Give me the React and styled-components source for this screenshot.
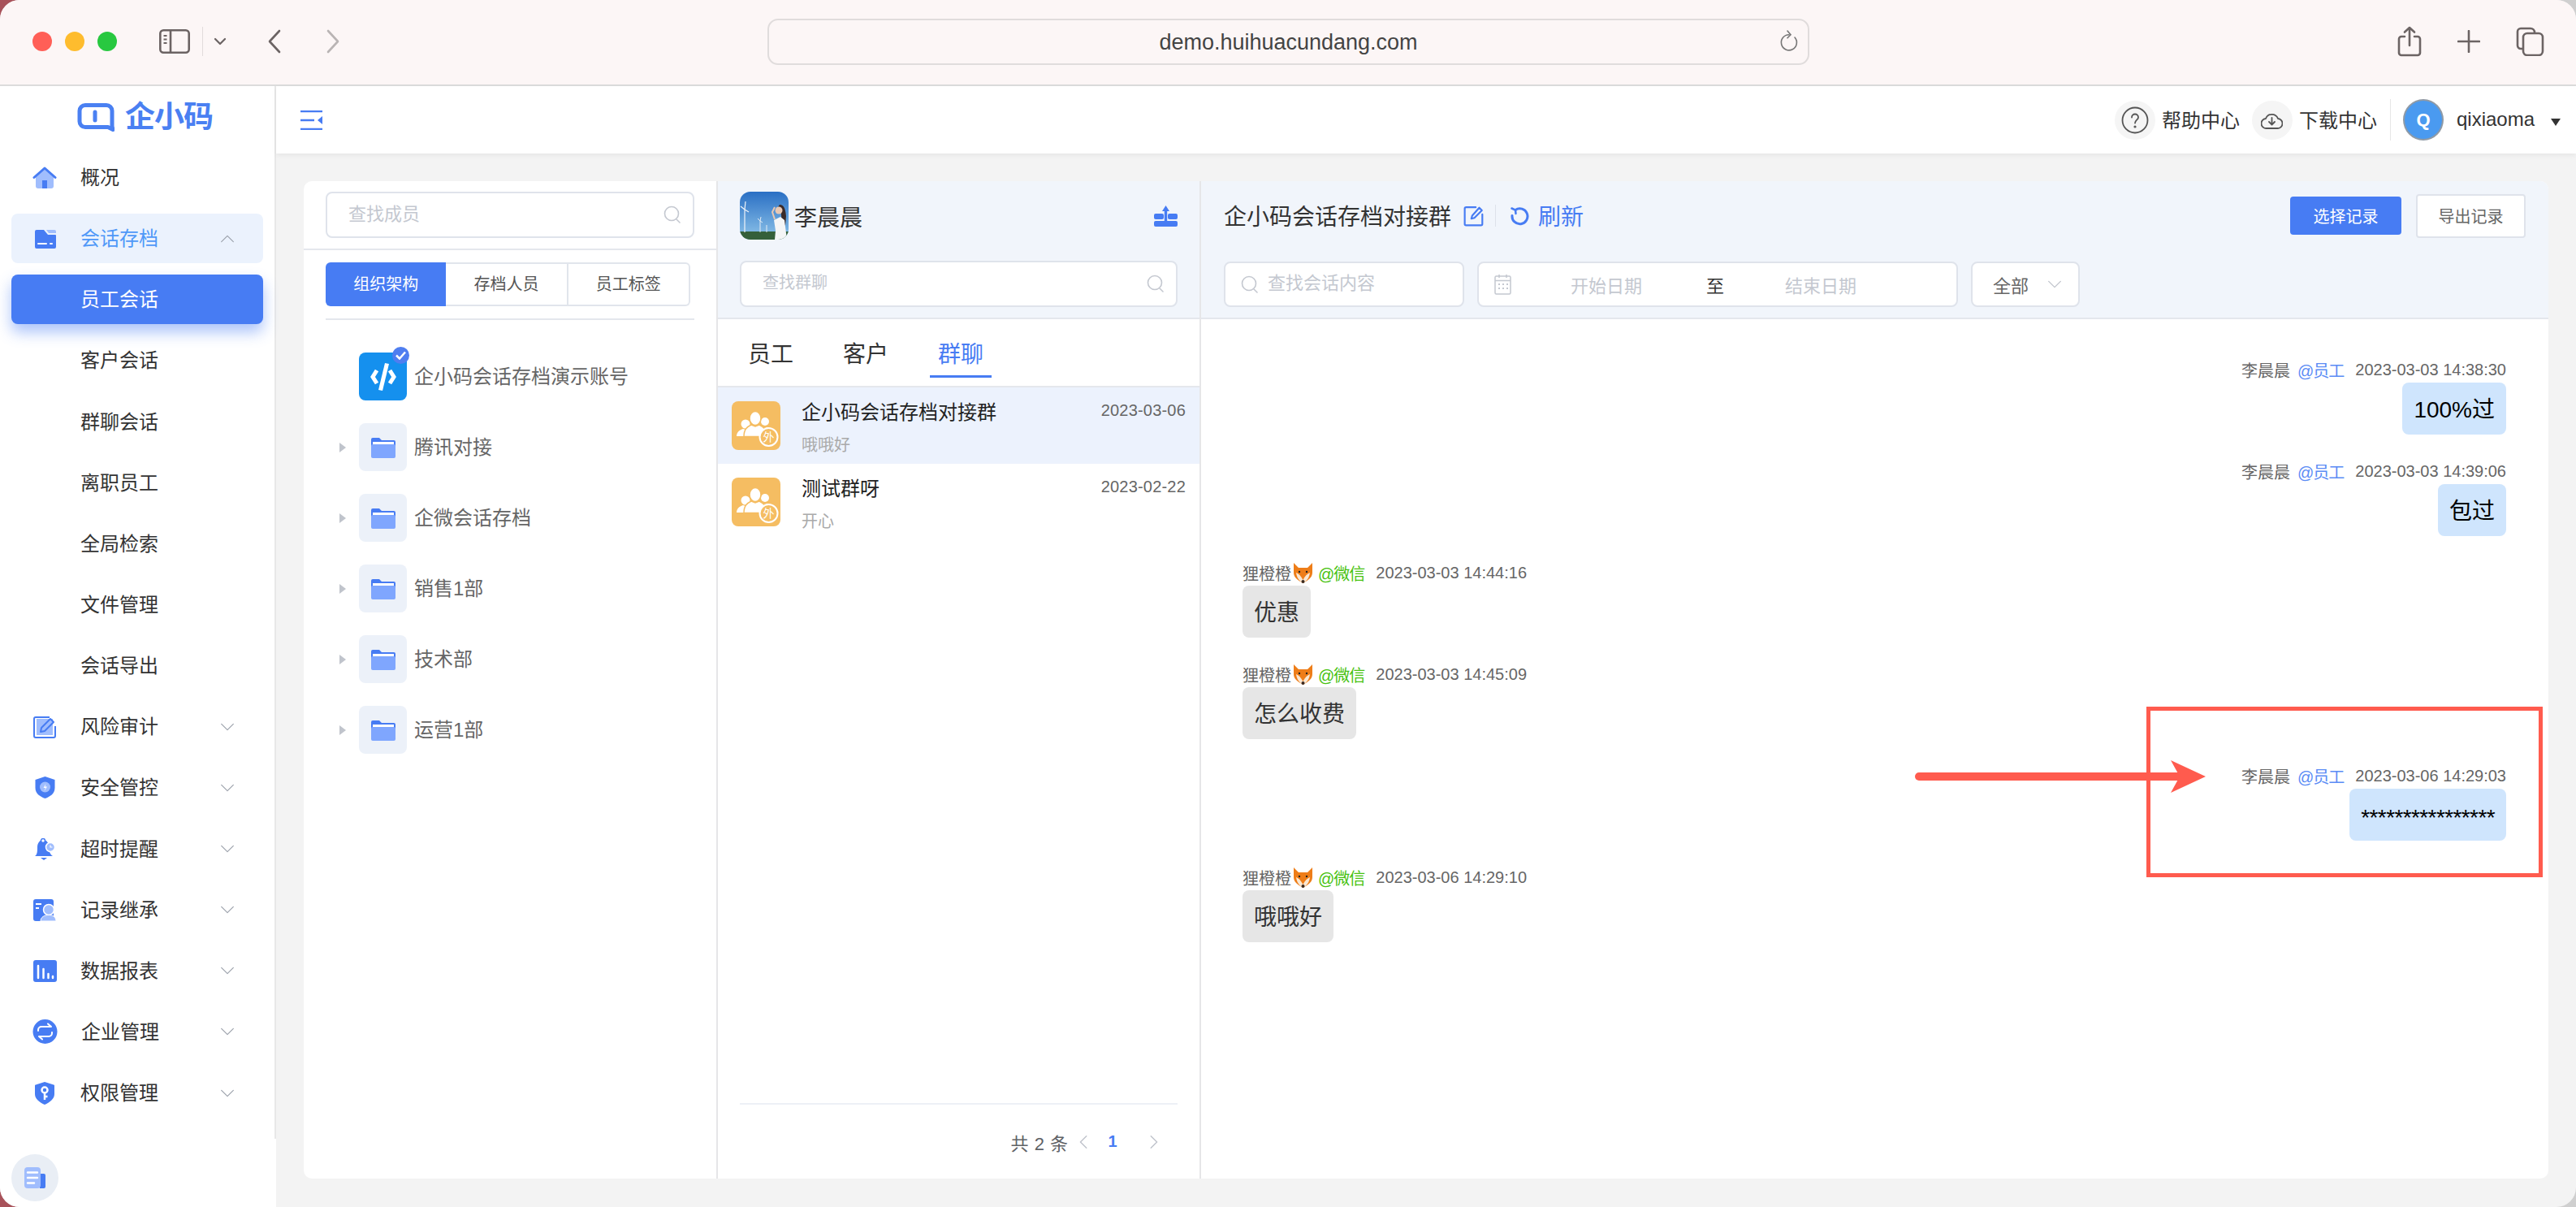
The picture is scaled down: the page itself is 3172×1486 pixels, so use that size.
import React from "react";
import styled, { createGlobalStyle } from "styled-components";

const BLUE = "#477cf3";
const LIGHT = "#a0bdfd";

const Global = createGlobalStyle`
  * { box-sizing: border-box; }
  html, body { margin: 0; padding: 0; width: 3172px; height: 1486px; overflow: hidden; background: linear-gradient(90deg, #a8525a 0 50%, #cfcfcf 50% 100%); }
  body, input, button { font-family: "Liberation Sans", "Noto Sans CJK SC", sans-serif; }
  svg { display: block; flex: none; }
`;

const Label = styled.span`
  padding-bottom: ${p => p.$up || 4}px;
`;
const Win = styled.div`
  width: 3172px; height: 1486px; border-radius: 24px; overflow: hidden;
  display: flex; flex-direction: column; background: #f3f3f3;
`;
const TitleBar = styled.header`
  flex: 0 0 106px; display: flex; align-items: center; padding-bottom: 2px;
  background: #fcf6f6; border-bottom: 2px solid #dcdcdc;
`;
const TitleLeft = styled.div`
  flex: 0 0 945px; display: flex; align-items: center; padding-left: 40px;
`;
const Light = styled.span`
  width: 24px; height: 24px; border-radius: 50%; margin-right: 16px; background: ${p => p.$c};
`;
const SepV = styled.span`
  width: 1px; height: 36px; background: #e2dcdc; margin: 0 12px 0 15px;
`;
const UrlBar = styled.div`
  position: relative; flex: 0 0 1283px; height: 57px; border: 2px solid #e0dcdc; border-radius: 13px;
  display: flex; align-items: center; justify-content: center; padding-top: 3px;
  font-size: 27px; color: #444;
`;
const UrlReload = styled.span`
  position: absolute; right: 11px; top: 10px;
`;
const TitleRight = styled.div`
  flex: 1; display: flex; align-items: center; justify-content: flex-end; gap: 44px; padding-right: 39px;
`;

const Body = styled.div`
  flex: 1; display: flex; min-height: 0;
`;
const Side = styled.aside`
  flex: 0 0 340px; display: flex; flex-direction: column; background: #fff;
`;
const SideMain = styled.div`
  flex: 0 0 1296px; border-right: 2px solid #e8e8e8; padding-left: 14px;
`;
const Logo = styled.div`
  height: 82px; padding: 21px 0 0 81px; display: flex; align-items: flex-start; gap: 13px;
`;
const LogoText = styled.span`
  font-size: 37px; line-height: 36px; font-weight: 700; color: #4a80f2; letter-spacing: -1px;
`;
const Nav = styled.nav`
  display: flex; flex-direction: column; gap: 14.15px;
`;
const NavItem = styled.div`
  width: 310px; height: 61px; border-radius: 8px; display: flex; align-items: center;
  padding-left: ${p => (p.$sub ? "85px" : "26px")}; padding-right: 33px;
  font-size: 24px; color: ${p => (p.$active ? "#fff" : p.$open ? "#4f98f8" : "#333")};
  background: ${p => (p.$active ? BLUE : p.$open ? "#ebf2fd" : "transparent")};
  box-shadow: ${p => (p.$active ? "0 10px 18px rgba(71,124,243,.45)" : "none")};
`;
const NavIcon = styled.span`
  flex: 0 0 30px; margin-right: 29px; display: flex; justify-content: center;
`;
const NavArrow = styled.span`
  margin-left: auto;
`;
const SideFoot = styled.div`
  flex: 1; padding: 19px 0 0 14px;
`;
const FootBtn = styled.div`
  width: 58px; height: 58px; border-radius: 50%; background: #e9eef5;
  display: flex; align-items: center; justify-content: center;
`;

const Main = styled.main`
  flex: 1; min-width: 0; display: flex; flex-direction: column;
`;
const TopBar = styled.div`
  flex: 0 0 83px; background: #fff; display: flex; align-items: center; padding: 0 19px 0 30px;
  box-shadow: 0 2px 6px rgba(0,0,0,.06); position: relative;
`;
const TopRight = styled.div`
  margin-left: auto; display: flex; align-items: center; font-size: 24px; color: #333;
`;
const IconCircle = styled.span`
  width: 50px; height: 48px; border-radius: 50%; background: #f5f5f5; margin: 0 8px 0 15px;
  display: flex; align-items: center; justify-content: center;
`;
const TopSep = styled.span`
  width: 1px; height: 51px; background: #e6e6e6; margin: 0 15px 0 16px;
`;
const UserAvatar = styled.span`
  width: 50px; height: 51px; border-radius: 50%; background: #4a9af0; border: 2px solid #8f9aa6;
  color: #fff; font-weight: 700; font-size: 22px; display: flex; align-items: center; justify-content: center;
`;
const UserName = styled.span`
  margin: 0 20px 0 16px; font-size: 24px; color: #333; padding-bottom: 2px;
`;
const Caret = styled.span`
  width: 0; height: 0; border-left: 6px solid transparent; border-right: 6px solid transparent;
  border-top: 9px solid #333; margin-top: 6px;
`;

const Content = styled.div`
  flex: 1; min-height: 0; padding: 34px 34px 35px; display: flex;
`;
const Card = styled.div`
  flex: 1; display: flex; border-radius: 10px; overflow: hidden; background: #fff;
`;
const Panel = styled.section`
  flex: 0 0 ${p => p.$w}px; display: flex; flex-direction: column; min-width: 0;
  border-right: 2px solid #e6e6e8;
`;
const Members = styled(Panel)`
  padding-top: 13px;
`;
const SearchBox = styled.div`
  position: relative; margin: ${p => p.$m || 0}; height: 57px; background: #fff;
  border: 2px solid #dfe3eb; border-radius: 8px; display: flex; align-items: center;
`;
const SearchIcon = styled.span`
  position: absolute; right: 14px; top: 14px;
`;
const Field = styled.input`
  flex: 1; width: 100%; min-width: 0; border: 0; outline: 0; background: transparent; padding: 0 0 ${p => p.$up || 0}px ${p => p.$pad}px;
  font-size: ${p => p.$size}px;
  &::placeholder { color: #c4c8d0; opacity: 1; }
`;
const Rule = styled.div`
  height: 2px; background: #e4e7ed; margin: 13px 0 15px;
`;
const Segs = styled.div`
  display: flex; margin: 0 27px; width: 449px; height: 54px;
`;
const Seg = styled.div`
  flex: 1; display: flex; align-items: center; justify-content: center; font-size: 20px; padding-bottom: 3px;
  color: ${p => (p.$on ? "#fff" : "#555")}; background: ${p => (p.$on ? BLUE : "#fff")};
  border-style: solid; border-color: #e1e5ec;
  border-width: ${p => (p.$on ? "0" : "2px 2px 2px 0")};
  border-radius: ${p => (p.$on ? "6px 0 0 6px" : p.$last ? "0 6px 6px 0" : "0")};
`;
const TreeRule = styled.div`
  height: 2px; margin: 15px 27px 0; background: #e4e7ed;
`;
const Tree = styled.div`
  padding: 40px 0 0 40px; display: flex; flex-direction: column; gap: 28px;
`;
const TreeRow = styled.div`
  position: relative; display: flex; align-items: center; padding-left: 28px; font-size: 24px; color: #666; height: 59px;
`;
const TreeCaret = styled.span`
  position: absolute; left: 4px; top: 24px; width: 0; height: 0;
  border-top: 6px solid transparent; border-bottom: 6px solid transparent; border-left: 8px solid #c0c4cc;
`;
const Tile = styled.span`
  width: 59px; height: 59px; border-radius: 8px; background: ${p => p.$bg}; margin-right: 9px;
  position: relative; display: flex; align-items: center; justify-content: center;
`;
const TileBadge = styled.span`
  position: absolute; right: -3px; top: -7px; width: 21px; height: 21px; border-radius: 50%; background: #4f7ef0;
  display: flex; align-items: center; justify-content: center;
`;

const Head = styled.div`
  flex: 0 0 170px; background: #f1f5fb; border-bottom: 2px solid #e4e7ed; padding: 13px ${p => p.$px}px 0;
`;
const HeadRow = styled.div`
  height: 59px; display: flex; align-items: center; margin-bottom: ${p => p.$mb}px;
`;
const OwnerName = styled.span`
  margin-left: 7px; font-size: 28px; color: #333;
`;
const Push = styled.span`
  margin-left: auto;
`;
const Tabs = styled.div`
  flex: 0 0 84px; display: flex; gap: 61px; padding-left: 37px; border-bottom: 2px solid #e4e7ed;
`;
const Tab = styled.div`
  position: relative; display: flex; align-items: center; font-size: 28px; color: ${p => (p.$on ? BLUE : "#333")};
  &::after {
    content: ""; display: ${p => (p.$on ? "block" : "none")}; position: absolute;
    left: -10px; right: -10px; bottom: 10px; height: 3px; background: ${BLUE};
  }
`;
const List = styled.div`
  flex: 1; min-height: 0;
`;
const Row = styled.div`
  height: 94px; padding: 17px 17px 0; display: flex; gap: 26px; background: ${p => (p.$on ? "#ecf2fd" : "#fff")};
`;
const RowBody = styled.div`
  flex: 1; min-width: 0;
`;
const RowTop = styled.div`
  height: 22px; display: flex; align-items: center; justify-content: space-between;
  font-size: 24px; color: #222;
`;
const RowDate = styled.span`
  font-size: 20px; color: #666; letter-spacing: .2px;
`;
const RowSub = styled.div`
  margin-top: 20px; font-size: 20px; line-height: 24px; color: #aaa;
`;
const Pager = styled.div`
  flex: 0 0 93px; margin: 0 27px; border-top: 2px solid #edf0f6; display: flex; align-items: center;
  justify-content: flex-end; padding-right: 15px; font-size: 22px; color: #606266;
`;
const PagerTotal = styled.span`
  margin-right: 5px; word-spacing: 1px;
`;
const PagerBtn = styled.span`
  width: 30px; display: flex; justify-content: center;
`;
const PagerNow = styled.span`
  width: 40px; text-align: center; font-size: 20px; font-weight: 700; color: ${BLUE}; margin-right: 15px;
`;

const Chat = styled.section`
  flex: 1; min-width: 0; display: flex; flex-direction: column;
`;
const ChatTitle = styled.span`
  font-size: 28px; color: #333; padding-bottom: 2px;
`;
const HeadSep = styled.span`
  width: 1px; height: 27px; background: #dde2ea; margin: 0 18px 0 13px;
`;
const Refresh = styled.span`
  margin-left: 11px; font-size: 28px; color: ${BLUE}; padding-bottom: 2px;
`;
const PrimaryBtn = styled.button`
  width: 137px; height: 47px; border: 0; border-radius: 4px; background: ${BLUE}; color: #fff; font-size: 20px; margin-right: 18px;
`;
const GhostBtn = styled.button`
  width: 135px; height: 54px; border: 2px solid #dfe3eb; border-radius: 4px; background: #fff; color: #666; font-size: 20px;
`;
const Filters = styled.div`
  display: flex; gap: 16px;
`;
const FilterBox = styled.div`
  position: relative; flex: 0 0 ${p => p.$w}px; min-width: 0; height: 56px; background: #fff; border: 2px solid #dfe3eb; border-radius: 8px;
  display: flex; align-items: center; padding-left: ${p => p.$pl}px; font-size: 22px; color: #666;
`;
const DatePart = styled.span`
  flex: 0 0 ${p => p.$w}px; text-align: center; color: ${p => (p.$dark ? "#333" : "#c4c8d0")};
`;
const SelectArrow = styled.span`
  margin-left: auto; margin-right: 18px;
`;
const Log = styled.div`
  position: relative; flex: 1; min-height: 0; padding: 47px 52px 0 51px; display: flex; flex-direction: column; gap: 30px;
`;
const Msg = styled.div`
  display: flex; flex-direction: column; align-items: ${p => (p.$me ? "flex-end" : "flex-start")};
`;
const Meta = styled.div`
  height: 31px; display: flex; align-items: center; font-size: 20px; color: #666;
`;
const Tag = styled.span`
  color: ${p => p.$c}; margin: 0 14px 0 ${p => p.$ml}px; letter-spacing: -1px;
`;
const Bubble = styled.div`
  height: 64px; padding: ${p => (p.$mask ? "18px" : "16px")} 14px 0; border-radius: 8px; font-size: 28px; line-height: 36px;
  background: ${p => (p.$me ? "#cfe5fd" : "#e6e6e6")}; color: ${p => (p.$me ? "#000" : "#333")};
  letter-spacing: ${p => (p.$mask ? "-0.6px" : "0")};
`;
const RedBox = styled.div`
  position: absolute; left: 1164px; top: 477px; width: 488px; height: 210px; border: 5px solid #ff5b4e; pointer-events: none;
`;
const RedArrow = styled.span`
  position: absolute; left: 879px; top: 543px;
`;

/* ---------- drawings ---------- */
const SidebarToggle = () => (
  <svg width="38" height="30" viewBox="0 0 38 30" fill="none" stroke="#6c6464" strokeWidth="2.6">
    <rect x="1.3" y="1.3" width="35.4" height="27.4" rx="4" />
    <path d="M14 1.5v27" />
    <path d="M5.5 8h4M5.500 12.500h4M5.500 17h4" strokeWidth="2" />
  </svg>
);
const Chev = ({ d = "down", c = "#b5b9c2", s = 22, w = 1.6 }) => {
  const p = { down: "M4 8l8 8 8-8", up: "M4 16l8-8 8 8", left: "M15 4l-8 8 8 8", right: "M9 4l8 8-8 8" }[d];
  return (
    <svg width={s} height={s} viewBox="0 0 24 24" fill="none" stroke={c} strokeWidth={w} strokeLinecap="round" strokeLinejoin="round">
      <path d={p} />
    </svg>
  );
};
const Back = styled.svg.attrs({ width: 18, height: 30, viewBox: "0 0 18 30", fill: "none", strokeWidth: 2.6, strokeLinecap: "round", strokeLinejoin: "round" })`
  stroke: #6c6464; margin-left: 49px;
`;
const Forward = styled(Back)`
  stroke: #b9b4b4; margin-left: 54px;
`;
const Reload = () => (
  <svg width="24" height="30" viewBox="0 0 24 30" fill="none" stroke="#777" strokeWidth="1.6" strokeLinecap="round">
    <path d="M19 11a9.500 9.500 0 1 1-7-3.200" />
    <path d="M10 3l4 4.800-4 4" />
  </svg>
);
const ShareIcon = () => (
  <svg width="30" height="38" viewBox="0 0 30 38" fill="none" stroke="#6c6464" strokeWidth="2.6" strokeLinecap="round" strokeLinejoin="round">
    <path d="M9 13H5a3 3 0 0 0-3 3v17a3 3 0 0 0 3 3h20a3 3 0 0 0 3-3V16a3 3 0 0 0-3-3h-4" />
    <path d="M15 24V2M9 7.500L15 2l6 5.500" />
  </svg>
);
const PlusIcon = () => (
  <svg width="28" height="28" viewBox="0 0 28 28" stroke="#6c6464" strokeWidth="2.6" strokeLinecap="round">
    <path d="M14 1v26M1 14h26" />
  </svg>
);
const CopyIcon = () => (
  <svg width="35" height="36" viewBox="0 0 35 36" fill="none" stroke="#6c6464" strokeWidth="2.6">
    <rect x="9" y="8" width="24" height="27" rx="5" />
    <path d="M9 27H6a4 4 0 0 1-4-4V6a4 4 0 0 1 4-4h12a5 5 0 0 1 5 5v1" />
  </svg>
);
const LogoMark = () => (
  <svg width="46" height="35" viewBox="0 0 46 35" fill="none" stroke="#4a80f2" strokeWidth="5" strokeLinejoin="round" strokeLinecap="round">
    <path d="M10 2.500h26a7 7 0 0 1 7 7v19l1 4-6-3H10a7 7 0 0 1-7-7V9.500a7 7 0 0 1 7-7z" />
    <path d="M22 11v10" />
  </svg>
);
const Home = () => (
  <svg width="30" height="27" viewBox="0 0 30 27">
    <path d="M4 12L15 3l11 9v12a3 3 0 0 1-3 3H7a3 3 0 0 1-3-3z" fill={LIGHT} />
    <rect x="12" y="17" width="6" height="10" fill={BLUE} />
    <path d="M2 13.500L15 2l13 11.500" fill="none" stroke={BLUE} strokeWidth="3" strokeLinecap="round" strokeLinejoin="round" />
  </svg>
);
const FileBox = () => (
  <svg width="27" height="24" viewBox="0 0 27 24">
    <path d="M1 3a2 2 0 0 1 2-2h9l5 6h9a1 1 0 0 1 1 1v14a2 2 0 0 1-2 2H3a2 2 0 0 1-2-2z" fill={BLUE} />
    <path d="M15 1h10a2 2 0 0 1 2 2v2H18z" fill={LIGHT} />
    <path d="M5 18h10M20 18h2" stroke="#fff" strokeWidth="2" strokeLinecap="round" />
  </svg>
);
const Audit = () => (
  <svg width="28" height="28" viewBox="0 0 28 28">
    <rect x="4" y="4" width="20" height="20" fill={LIGHT} />
    <path d="M20 2H3a2 2 0 0 0-2 2v21a2 2 0 0 0 2 2h22a2 2 0 0 0 2-2V13" fill="none" stroke={BLUE} strokeWidth="2" />
    <path d="M9 20l1-5L21 4l4 4-11 11z" fill={LIGHT} stroke={BLUE} strokeWidth="2" strokeLinejoin="round" />
  </svg>
);
const Shield = () => (
  <svg width="25" height="27" viewBox="0 0 25 27">
    <path d="M12.500 0l12 4v10c0 7-6 11-12 13C6.500 25 .5 21 .5 14V4z" fill={BLUE} />
    <circle cx="12.500" cy="13" r="6.500" fill={LIGHT} />
    <path d="M13.500 9l-3 5h2.500l-1.500 4 3.500-5.500H12.500z" fill="#fff" />
  </svg>
);
const Bell = () => (
  <svg width="26" height="27" viewBox="0 0 26 27">
    <path d="M11 2c5 0 7 4 7 9 0 5 2 9 5 11H1c3-2 3-6 3-11 0-5 3-9 7-9z" fill={BLUE} />
    <path d="M8 24h8l-4 3z" fill={BLUE} />
    <circle cx="11" cy="3" r="2.500" fill="#fff" stroke={BLUE} strokeWidth="1.500" />
    <circle cx="20" cy="11" r="5.500" fill={LIGHT} stroke="#fff" strokeWidth="1.500" />
    <path d="M20 8.500V11h2.500" stroke="#fff" strokeWidth="1.200" fill="none" />
  </svg>
);
const Record = () => (
  <svg width="28" height="27" viewBox="0 0 28 27">
    <rect x="0" y="0" width="25" height="27" rx="3" fill={BLUE} />
    <path d="M3 6h7M3 11h4" stroke="#fff" strokeWidth="2" />
    <circle cx="19" cy="13" r="6.500" fill={LIGHT} stroke="#fff" strokeWidth="1.500" />
    <path d="M9 27c0-5 5-7.500 10-7.500s9 2.500 9 7.500z" fill={LIGHT} stroke="#fff" strokeWidth="1" />
  </svg>
);
const Chart = () => (
  <svg width="29" height="27" viewBox="0 0 29 27">
    <rect width="29" height="27" rx="3" fill={BLUE} />
    <path d="M6 7v15M12.500 11v11M18.500 17v5M24 20v2" stroke="#fff" strokeWidth="2.500" strokeLinecap="round" />
  </svg>
);
const Sync = () => (
  <svg width="31" height="30" viewBox="0 0 31 30">
    <circle cx="15.500" cy="15" r="15" fill={BLUE} />
    <path d="M7 14v-1a4 4 0 0 1 4-4h12l-4-3.500M24 16v1a4 4 0 0 1-4 4H8l4 3.500" fill="none" stroke="#fff" strokeWidth="2" strokeLinecap="round" strokeLinejoin="round" />
  </svg>
);
const KeyShield = () => (
  <svg width="24" height="28" viewBox="0 0 24 28">
    <path d="M12 0l11 3.500a1 1 0 0 1 1 1V15c0 6-6 10.500-12 13C6 25.500 0 21 0 15V4.500a1 1 0 0 1 1-1z" fill={BLUE} />
    <circle cx="12" cy="10" r="3.500" fill="none" stroke="#fff" strokeWidth="2.500" />
    <path d="M12 13v9M12 18h3.500" stroke="#fff" strokeWidth="2.500" />
  </svg>
);
const FootDoc = () => (
  <svg width="26" height="27" viewBox="0 0 26 27">
    <path d="M19 8h5a2 2 0 0 1 2 2v14a2 2 0 0 1-2 2h-5z" fill={BLUE} />
    <rect width="20" height="26" rx="4" fill={LIGHT} />
    <path d="M4 6.500h12M4 13h12M4 19.500h8" stroke="#fff" strokeWidth="2.500" strokeLinecap="round" />
  </svg>
);
const Collapse = () => (
  <svg width="27" height="24" viewBox="0 0 27 24">
    <path d="M0 1h27M0 12h17M0 23h27" stroke={BLUE} strokeWidth="2.500" />
    <path d="M27 7v10l-6-5z" fill={BLUE} />
  </svg>
);
const Help = () => (
  <svg width="34" height="34" viewBox="0 0 34 34" fill="none" stroke="#555" strokeWidth="1.800" strokeLinecap="round">
    <circle cx="17" cy="17" r="15.500" />
    <path d="M13 13.500a4 4 0 0 1 8 0c0 3-4 3.500-4 7" />
    <circle cx="17" cy="25" r=".7" fill="#555" />
  </svg>
);
const Cloud = () => (
  <svg width="27" height="24" viewBox="0 0 27 24" fill="none" stroke="#555" strokeWidth="1.800" strokeLinecap="round" strokeLinejoin="round">
    <path d="M7 22a6 6 0 0 1-1-12 8 8 0 0 1 15 0 6 6 0 0 1-1 12z" />
    <path d="M13.500 9v8M10 14l3.500 3.500L17 14" />
  </svg>
);
const Magnifier = ({ c = "#c4c8d0" }) => (
  <svg width="22" height="24" viewBox="0 0 22 24" fill="none" stroke={c} strokeWidth="1.600" strokeLinecap="round">
    <circle cx="10" cy="11" r="8.500" />
    <path d="M16 18l4 4" />
  </svg>
);
const CodeMark = () => (
  <svg width="34" height="38" viewBox="0 0 34 38">
    <g fill="none" stroke="#fff" strokeWidth="5" strokeLinejoin="miter">
      <path d="M9 11l-5 8 5 8M25 11l5 8-5 8" />
    </g>
    <path d="M19 2l5 1-8 33-5-1z" fill="#fff" />
  </svg>
);
const Folder = () => (
  <svg width="30" height="26" viewBox="0 0 30 26">
    <path d="M0 3a2 2 0 0 1 2-2h8l3 3h15a2 2 0 0 1 2 2v8H0z" fill={BLUE} />
    <rect x="2" y="6" width="26" height="3" fill="#fff" />
    <rect x="0" y="9" width="30" height="17" rx="2" fill="#7fa6fe" />
  </svg>
);
const Upload = () => (
  <svg width="29" height="26" viewBox="0 0 29 26">
    <path d="M14.500 0l4.500 7h-2.800v12h-3.400V7H10z" fill={BLUE} />
    <rect x="0" y="10" width="12" height="7" rx="2" fill={BLUE} />
    <rect x="17" y="10" width="12" height="7" rx="2" fill={BLUE} />
    <rect x="0" y="19" width="29" height="7" rx="2" fill={BLUE} />
  </svg>
);
const OwnerPhoto = () => (
  <svg width="60" height="59" viewBox="0 0 60 59">
    <defs>
      <linearGradient id="sky" x1="0" y1="0" x2="0" y2="1">
        <stop offset="0" stopColor="#2a6fc4" />
        <stop offset="1" stopColor="#8fc5ea" />
      </linearGradient>
      <clipPath id="rr"><rect width="60" height="59" rx="13" /></clipPath>
    </defs>
    <g clipPath="url(#rr)">
      <rect width="60" height="59" fill="url(#sky)" />
      <rect y="49" width="60" height="10" fill="#35603a" />
      <path d="M6 50V22M6 22l-5-4M6 22l1-10M6 22l5 3" stroke="#f0f4f8" strokeWidth="1.200" fill="none" />
      <path d="M25 50V36M25 36l-3-3M25 36l1-5M25 36l3 2M33 50V41" stroke="#eef2f6" strokeWidth=".9" fill="none" />
      <path d="M49 16c5 0 7 4 8 14l-1 12-5-6c1-8-1-14-4-17z" fill="#3b2a27" />
      <path d="M42 35l8-4 5 4 3 24H43l1-11z" fill="#f4f5f6" />
      <circle cx="48" cy="23" r="4.500" fill="#e9c8b3" />
      <path d="M43 34l-3-9 3-6" stroke="#e9c8b3" strokeWidth="2" fill="none" />
    </g>
  </svg>
);
const GroupTile = styled.span`
  position: relative; flex: 0 0 60px; height: 60px; border-radius: 8px; background: #f5bd62; display: block;
`;
const GroupGlyph = () => (
  <svg width="60" height="60" viewBox="0 0 60 60">
    <g fill="#fff">
      <circle cx="17" cy="28" r="5.500" />
      <path d="M6 43c0-5 4-8 8-9l3 1 3-1c3 1 5 3 6 9z" />
      <circle cx="41" cy="25" r="5" />
      <path d="M34 43c0-6 1-9 4-11l3 1 3-1c2 1 4 2 5 5l-6 6z" />
    </g>
    <g fill="#fff" stroke="#f5bd62" strokeWidth="1.500">
      <path d="M15 43.500c0-9 4-12 9-14.500l5 2 5-2c5 2.500 9 5.500 9 14.500z" />
      <ellipse cx="29" cy="21" rx="7" ry="8.500" />
    </g>
    <circle cx="45.500" cy="44" r="11" fill="#f5bd62" stroke="#fff" strokeWidth="2" />
    <text x="45.500" y="49" textAnchor="middle" fontSize="14" fill="#fff" fontFamily='"Noto Sans CJK SC", sans-serif'>外</text>
  </svg>
);
const Edit = () => (
  <svg width="26" height="26" viewBox="0 0 24 24" fill="none" stroke={BLUE} strokeWidth="2" strokeLinecap="round" strokeLinejoin="round">
    <path d="M14 2H3a1.500 1.500 0 0 0-1.500 1.500V21A1.500 1.500 0 0 0 3 22.500h17a1.500 1.500 0 0 0 1.500-1.500V10" />
    <path d="M9 15l1-3.500 8-9 3 3-8.500 8.500z" />
  </svg>
);
const RefreshIcon = () => (
  <svg width="23" height="24" viewBox="0 0 23 24" fill="none" stroke={BLUE} strokeWidth="3" strokeLinecap="round">
    <path d="M6 4.500a9.500 9.500 0 1 1-4 7" />
    <path d="M1.500 2.500L6 4.500 6.500 9" strokeWidth="2.500" />
  </svg>
);
const Calendar = () => (
  <svg width="21" height="26" viewBox="0 0 21 26" fill="none" stroke="#c4c8d0" strokeWidth="1.500">
    <rect x="1" y="3" width="19" height="22" rx="1.500" />
    <path d="M1 8.500h19M6 1v4M15 1v4" />
    <path d="M5 13h2M10 13h2M15 13h2M5 18h2M10 18h2M15 18h2" strokeWidth="1.800" />
  </svg>
);
const FoxBox = styled.svg.attrs({ width: 25, height: 27, viewBox: "0 0 25 27" })`
  margin: 0 6px 0 2px;
`;
const Fox = () => (
  <FoxBox>
    <path d="M1 1l6 6h11l6-6v12c0 6-5 9-11.500 13C6 22 1 19 1 13z" fill="#ee7d18" />
    <path d="M4 13c3 1 6 4 8.500 9 2-5 6-8 8.500-9-1 7-4 10-8.500 13C8 23 5 20 4 13z" fill="#f9e7d2" />
    <circle cx="12.500" cy="24" r="2" fill="#3a2a20" />
    <circle cx="8" cy="12" r="1.200" fill="#222" />
    <circle cx="17" cy="12" r="1.200" fill="#222" />
  </FoxBox>
);
const Gap = styled.span`
  flex: 0 0 ${p => p.$w}px;
`;

/* ---------- data ---------- */
const navItems = [
  { t: "概况", i: <Home /> },
  { t: "会话存档", i: <FileBox />, open: true, arrow: "up" },
  { t: "员工会话", sub: true, active: true },
  { t: "客户会话", sub: true },
  { t: "群聊会话", sub: true },
  { t: "离职员工", sub: true },
  { t: "全局检索", sub: true },
  { t: "文件管理", sub: true },
  { t: "会话导出", sub: true },
  { t: "风险审计", i: <Audit />, arrow: "down" },
  { t: "安全管控", i: <Shield />, arrow: "down" },
  { t: "超时提醒", i: <Bell />, arrow: "down" },
  { t: "记录继承", i: <Record />, arrow: "down" },
  { t: "数据报表", i: <Chart />, arrow: "down" },
  { t: "企业管理", i: <Sync />, arrow: "down" },
  { t: "权限管理", i: <KeyShield />, arrow: "down" },
];
const dirs = ["腾讯对接", "企微会话存档", "销售1部", "技术部", "运营1部"];
const groups = [
  { t: "企小码会话存档对接群", d: "2023-03-06", s: "哦哦好", on: true },
  { t: "测试群呀", d: "2023-02-22", s: "开心" },
];
const msgs = [
  { me: true, time: "2023-03-03 14:38:30", text: "100%过" },
  { me: true, time: "2023-03-03 14:39:06", text: "包过" },
  { time: "2023-03-03 14:44:16", text: "优惠" },
  { time: "2023-03-03 14:45:09", text: "怎么收费" },
  { me: true, time: "2023-03-06 14:29:03", text: "****************", mask: true },
  { time: "2023-03-06 14:29:10", text: "哦哦好" },
];

export default function App() {
  return (
    <>
      <Global />
      <Win>
        <TitleBar>
          <TitleLeft>
            <Light $c="#ff5f57" />
            <Light $c="#febc2e" />
            <Light $c="#28c840" />
            <Gap $w={36} />
            <SidebarToggle />
            <SepV />
            <Chev d="down" c="#6c6464" s={18} w={3} />
            <Back><path d="M15 2L3 15l12 13" /></Back>
            <Forward><path d="M3 2l12 13L3 28" /></Forward>
          </TitleLeft>
          <UrlBar>
            demo.huihuacundang.com
            <UrlReload><Reload /></UrlReload>
          </UrlBar>
          <TitleRight>
            <ShareIcon />
            <PlusIcon />
            <CopyIcon />
          </TitleRight>
        </TitleBar>
        <Body>
          <Side>
            <SideMain>
              <Logo>
                <LogoMark />
                <LogoText>企小码</LogoText>
              </Logo>
              <Nav>
                {navItems.map(n => (
                  <NavItem key={n.t} $sub={n.sub} $active={n.active} $open={n.open}>
                    {n.i && <NavIcon>{n.i}</NavIcon>}
                    <Label>{n.t}</Label>
                    {n.arrow && <NavArrow><Chev d={n.arrow} c="#9aa0aa" s={22} w={1.2} /></NavArrow>}
                  </NavItem>
                ))}
              </Nav>
            </SideMain>
            <SideFoot>
              <FootBtn><FootDoc /></FootBtn>
            </SideFoot>
          </Side>
          <Main>
            <TopBar>
              <Collapse />
              <TopRight>
                <IconCircle><Help /></IconCircle>
                <Label $up={3}>帮助中心</Label>
                <IconCircle><Cloud /></IconCircle>
                <Label $up={3}>下载中心</Label>
                <TopSep />
                <UserAvatar>Q</UserAvatar>
                <UserName>qixiaoma</UserName>
                <Caret />
              </TopRight>
            </TopBar>
            <Content>
              <Card>
                <Members $w={510}>
                  <SearchBox $m="0 27px">
                    <Field $pad={26} $size={22} $up={2} placeholder="查找成员" />
                    <SearchIcon><Magnifier /></SearchIcon>
                  </SearchBox>
                  <Rule />
                  <Segs>
                    <Seg $on>组织架构</Seg>
                    <Seg>存档人员</Seg>
                    <Seg $last>员工标签</Seg>
                  </Segs>
                  <TreeRule />
                  <Tree>
                    <TreeRow>
                      <Tile $bg="#1590ee">
                        <CodeMark />
                        <TileBadge>
                          <svg width="13" height="11" viewBox="0 0 13 11" fill="none" stroke="#fff" strokeWidth="2.500"><path d="M1 5.500l4 4 7-8" /></svg>
                        </TileBadge>
                      </Tile>
                      <Label>企小码会话存档演示账号</Label>
                    </TreeRow>
                    {dirs.map(d => (
                      <TreeRow key={d}>
                        <TreeCaret />
                        <Tile $bg="#ecf1f9"><Folder /></Tile>
                        <Label>{d}</Label>
                      </TreeRow>
                    ))}
                  </Tree>
                </Members>
                <Panel $w={595}>
                  <Head $px={27}>
                    <HeadRow $mb={26}>
                      <OwnerPhoto />
                      <OwnerName>李晨晨</OwnerName>
                      <Push><Upload /></Push>
                    </HeadRow>
                    <SearchBox>
                      <Field $pad={26} $size={20} $up={2} placeholder="查找群聊" />
                      <SearchIcon><Magnifier /></SearchIcon>
                    </SearchBox>
                  </Head>
                  <Tabs>
                    <Tab>员工</Tab>
                    <Tab>客户</Tab>
                    <Tab $on>群聊</Tab>
                  </Tabs>
                  <List>
                    {groups.map(g => (
                      <Row key={g.t} $on={g.on}>
                        <GroupTile><GroupGlyph /></GroupTile>
                        <RowBody>
                          <RowTop>
                            {g.t}
                            <RowDate>{g.d}</RowDate>
                          </RowTop>
                          <RowSub>{g.s}</RowSub>
                        </RowBody>
                      </Row>
                    ))}
                  </List>
                  <Pager>
                    <PagerTotal>共 2 条</PagerTotal>
                    <PagerBtn><Chev d="left" c="#c0c4cc" s={22} w={1.6} /></PagerBtn>
                    <PagerNow>1</PagerNow>
                    <PagerBtn><Chev d="right" c="#c0c4cc" s={22} w={1.6} /></PagerBtn>
                  </Pager>
                </Panel>
                <Chat>
                  <Head $px={28}>
                    <HeadRow $mb={27}>
                      <ChatTitle>企小码会话存档对接群</ChatTitle>
                      <Gap $w={15} />
                      <Edit />
                      <HeadSep />
                      <RefreshIcon />
                      <Refresh>刷新</Refresh>
                      <Push />
                      <PrimaryBtn>选择记录</PrimaryBtn>
                      <GhostBtn>导出记录</GhostBtn>
                    </HeadRow>
                    <Filters>
                      <FilterBox $w={296} $pl={19}>
                        <Magnifier />
                        <Field $pad={11} $size={22} $up={2} placeholder="查找会话内容" />
                      </FilterBox>
                      <FilterBox $w={592} $pl={19}>
                        <Calendar />
                        <DatePart $w={234}>开始日期</DatePart>
                        <DatePart $w={34} $dark>至</DatePart>
                        <DatePart $w={226}>结束日期</DatePart>
                      </FilterBox>
                      <FilterBox $w={134} $pl={25}>
                        全部
                        <SelectArrow><Chev d="down" c="#c0c4cc" s={22} w={1.4} /></SelectArrow>
                      </FilterBox>
                    </Filters>
                  </Head>
                  <Log>
                    {msgs.map(m => (
                      <Msg key={m.time} $me={m.me}>
                        <Meta>
                          {m.me ? "李晨晨" : "狸橙橙"}
                          {m.me ? (
                            <Tag $c="#5b8cf5" $ml={9}>@员工</Tag>
                          ) : (
                            <>
                              <Fox />
                              <Tag $c="#47c20f" $ml={0}>@微信</Tag>
                            </>
                          )}
                          {m.time}
                        </Meta>
                        <Bubble $me={m.me} $mask={m.mask}>{m.text}</Bubble>
                      </Msg>
                    ))}
                    <RedBox />
                    <RedArrow>
                      <svg width="358" height="40" viewBox="0 0 358 40" fill="#ff5b4e">
                        <rect x="0" y="15" width="330" height="10" rx="5" />
                        <path d="M315 0l43 20-43 20 11-20z" />
                      </svg>
                    </RedArrow>
                  </Log>
                </Chat>
              </Card>
            </Content>
          </Main>
        </Body>
      </Win>
    </>
  );
}
